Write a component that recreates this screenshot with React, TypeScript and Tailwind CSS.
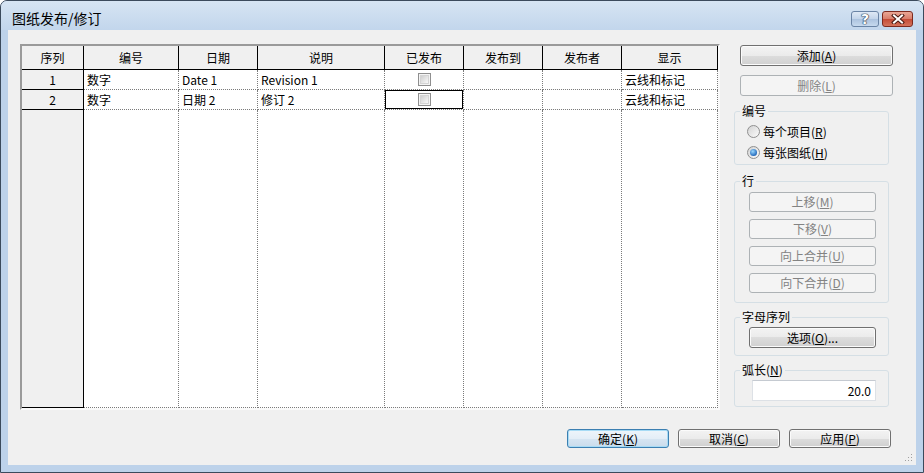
import React from "react";

const colW = [
  "w-[62px]",
  "w-[95px]",
  "w-[79px]",
  "w-[127px]",
  "w-[79px]",
  "w-[79px]",
  "w-[79px]",
  "w-[96px]",
];

const headers = ["序列", "编号", "日期", "说明", "已发布", "发布到", "发布者", "显示"];

function Check() {
  return (
    <div className="w-[13px] h-[13px] border border-[#8f8f8f] bg-[#f4f4f4] p-[1px]">
      <div className="w-full h-full border border-[#d4d4d4] bg-[linear-gradient(135deg,#cfcfcf,#f9f9f9)]" />
    </div>
  );
}

function Radio({ checked }: { checked?: boolean }) {
  return (
    <div className="w-[13px] h-[13px] rounded-full border border-[#8f8f8f] bg-[linear-gradient(135deg,#d3d3d3,#fbfbfb)] flex items-center justify-center">
      {checked && (
        <div className="w-[7px] h-[7px] rounded-full bg-[radial-gradient(circle_at_40%_35%,#9ad8ff,#1d64b8_75%)]" />
      )}
    </div>
  );
}

function Btn({
  children,
  className = "",
  disabled,
  def,
}: {
  children: React.ReactNode;
  className?: string;
  disabled?: boolean;
  def?: boolean;
}) {
  let look =
    "border-[#707070] bg-[linear-gradient(#f3f3f3_0%,#ebebeb_50%,#dddddd_50%,#d0d0d0_100%)] shadow-[inset_0_0_0_1px_#fbfbfb] text-black";
  if (disabled) look = "border-[#adb2b5] bg-[#f4f4f4] text-[#838383]";
  if (def)
    look =
      "border-[#3c7fb1] bg-[linear-gradient(#eef5fb_0%,#e4eef7_50%,#d6e5f2_50%,#cadcec_100%)] shadow-[inset_0_0_0_1px_#a7dbf5] text-black";
  return (
    <div
      className={`flex items-center justify-center rounded-[3px] border text-[12px] leading-[14px] ${look} ${className}`}
    >
      {children}
    </div>
  );
}

function M({ c }: { c: string }) {
  return (
    <>
      (<span className="underline underline-offset-[1px]">{c}</span>)
    </>
  );
}

function Group({
  title,
  children,
  className = "",
}: {
  title: React.ReactNode;
  children: React.ReactNode;
  className?: string;
}) {
  return (
    <fieldset className={`w-[155px] border border-[#d5dfe5] rounded-[3px] px-0 ${className}`}>
      <legend className="ml-[5px] px-[2px] text-[12px] leading-[14px] text-black">{title}</legend>
      {children}
    </fieldset>
  );
}

export default function App() {
  const rows = [
    ["1", "数字", "Date 1", "Revision 1", "chk", "", "", "云线和标记"],
    ["2", "数字", "日期 2", "修订 2", "chkf", "", "", "云线和标记"],
  ];

  return (
    <div className="w-[924px] h-[473px] [font-family:'Noto_Sans_CJK_SC','Noto_Sans',sans-serif] text-black">
      <div className="w-full h-full flex flex-col border border-[#3b4a5c] rounded-t-[7px] bg-[#bdd2ea] overflow-hidden">
        {/* Title bar */}
        <div className="h-[29px] flex items-start justify-between bg-[linear-gradient(180deg,#d6e4f3,#c2d6ec)]">
          <div className="pl-[11px] pt-[9px] text-[14px] leading-[17px] text-black">图纸发布/修订</div>
          <div className="flex gap-[3px] pt-[10px] pr-[10px]">
            <div className="w-[28px] h-[16px] rounded-[3px] border border-[#6a84a5] bg-[linear-gradient(#dfe9f5_0%,#c2d4ea_50%,#abc2de_50%,#c6d9ee_100%)] flex items-center justify-center">
              <span className="[font-family:'DejaVu_Sans',sans-serif] text-[14px] leading-[14px] font-bold text-white [text-shadow:0_0_1px_#2d3e55,0_0_1px_#2d3e55,0_0_1px_#2d3e55,0_0_1px_#2d3e55]">
                ?
              </span>
            </div>
            <div className="w-[31px] h-[16px] rounded-[3px] border border-[#7d2a1f] bg-[linear-gradient(#eaa796_0%,#d87c69_50%,#c44a35_50%,#d4735c_100%)] flex items-center justify-center">
              <svg width="14" height="10" viewBox="0 0 14 10">
                <path d="M3 1.5 L11 8.5 M11 1.5 L3 8.5" stroke="#4a1a12" strokeWidth="4" strokeLinecap="square" />
                <path d="M3 1.5 L11 8.5 M11 1.5 L3 8.5" stroke="#ffffff" strokeWidth="2" strokeLinecap="square" />
              </svg>
            </div>
          </div>
        </div>

        {/* Client */}
        <div className="relative mx-[7px] w-[908px] h-[435px] bg-[#f0f0f0] flex flex-col pt-[14px] pl-[12px]">
          <div className="flex items-start gap-[14px]">
            {/* Table */}
            <div className="w-[700px] h-[366px] flex flex-col border-t-2 border-l-2 border-r-2 border-b-2 border-t-[#9a9a9a] border-l-[#9a9a9a] border-r-[#fafafa] border-b-[#fafafa] bg-white text-[12px] leading-[14px]">
              {/* Header */}
              <div className="flex h-[24px]">
                {headers.map((h, i) => (
                  <div
                    key={i}
                    className={`${colW[i]} h-full shrink-0 bg-[#f0f0f0] border-r border-b border-black flex items-center justify-center`}
                  >
                    {h}
                  </div>
                ))}
              </div>
              {rows.map((r, ri) => (
                <div key={ri} className="flex h-[20px]">
                  {r.map((v, i) =>
                    i === 0 ? (
                      <div
                        key={i}
                        className={`${colW[i]} h-full shrink-0 bg-[#f0f0f0] border-r border-b border-black flex items-center justify-center`}
                      >
                        {v}
                      </div>
                    ) : (
                      <div
                        key={i}
                        className={`${colW[i]} h-full shrink-0 border-r border-b border-dotted border-[#7a7a7a] flex items-center ${
                          v === "chk" || v === "chkf" ? "justify-center" : "pl-[3px]"
                        } ${v === "chkf" ? "shadow-[inset_0_0_0_1px_#000]" : ""}`}
                      >
                        {v === "chk" || v === "chkf" ? <Check /> : v}
                      </div>
                    )
                  )}
                </div>
              ))}
              {/* Filler */}
              <div className="flex flex-1">
                {colW.map((w, i) =>
                  i === 0 ? (
                    <div key={i} className={`${w} h-full shrink-0 bg-[#f0f0f0] border-r border-b border-black`} />
                  ) : (
                    <div key={i} className={`${w} h-full shrink-0 border-r border-b border-dotted border-[#7a7a7a]`} />
                  )
                )}
              </div>
            </div>

            {/* Right column */}
            <div className="w-[159px] flex flex-col">
              <Btn className="ml-[6px] w-[153px] h-[21px] mt-[1px]">
                添加<M c="A" />
              </Btn>
              <Btn disabled className="ml-[6px] w-[153px] h-[21px] mt-[9px]">
                删除<M c="L" />
              </Btn>

              <Group title="编号" className="mt-[8px]">
                <div className="flex flex-col pt-[3px] pb-[1px] pl-[12px] text-[12px] leading-[14px]">
                  <div className="h-[21px] flex items-center gap-[3px]">
                    <Radio />
                    <span>
                      每个项目<M c="R" />
                    </span>
                  </div>
                  <div className="h-[21px] flex items-center gap-[3px]">
                    <Radio checked />
                    <span>
                      每张图纸<M c="H" />
                    </span>
                  </div>
                </div>
              </Group>

              <Group title="行" className="mt-[9px]">
                <div className="flex flex-col gap-[7px] pt-[4px] pb-[9px] pl-[14px]">
                  <Btn disabled className="w-[127px] h-[20px]">
                    上移<M c="M" />
                  </Btn>
                  <Btn disabled className="w-[127px] h-[20px]">
                    下移<M c="V" />
                  </Btn>
                  <Btn disabled className="w-[127px] h-[20px]">
                    向上合并<M c="U" />
                  </Btn>
                  <Btn disabled className="w-[127px] h-[20px]">
                    向下合并<M c="D" />
                  </Btn>
                </div>
              </Group>

              <Group title="字母序列" className="mt-[7px]">
                <div className="pt-[3px] pb-[7px] pl-[14px]">
                  <Btn className="w-[127px] h-[21px]">
                    选项<M c="O" />...
                  </Btn>
                </div>
              </Group>

              <Group
                title={
                  <>
                    弧长<M c="N" />
                  </>
                }
                className="mt-[7px]"
              >
                <div className="pt-[3px] pb-[5px] pl-[17px]">
                  <div className="w-[124px] h-[21px] bg-white border border-[#dde1e6] border-t-[#c5cad1] flex items-center justify-end pr-[4px] text-[12px] leading-[14px]">
                    20.0
                  </div>
                </div>
              </Group>
            </div>
          </div>

          {/* Bottom buttons */}
          <div className="mt-[19px] flex justify-end gap-[9px] pr-[25px]">
            <Btn def className="w-[102px] h-[19px]">
              确定<M c="K" />
            </Btn>
            <Btn className="w-[102px] h-[19px]">
              取消<M c="C" />
            </Btn>
            <Btn className="w-[102px] h-[19px]">
              应用<M c="P" />
            </Btn>
          </div>

          {/* Size grip */}
          <svg className="absolute right-[3px] bottom-[3px]" width="8" height="8" viewBox="0 0 8 8">
            <rect x="6" y="0" width="1" height="1" fill="#a0a0a0" />
            <rect x="3" y="3" width="1" height="1" fill="#a0a0a0" />
            <rect x="6" y="3" width="1" height="1" fill="#a0a0a0" />
            <rect x="0" y="6" width="1" height="1" fill="#a0a0a0" />
            <rect x="3" y="6" width="1" height="1" fill="#a0a0a0" />
            <rect x="6" y="6" width="1" height="1" fill="#a0a0a0" />
          </svg>
        </div>
      </div>
    </div>
  );
}
